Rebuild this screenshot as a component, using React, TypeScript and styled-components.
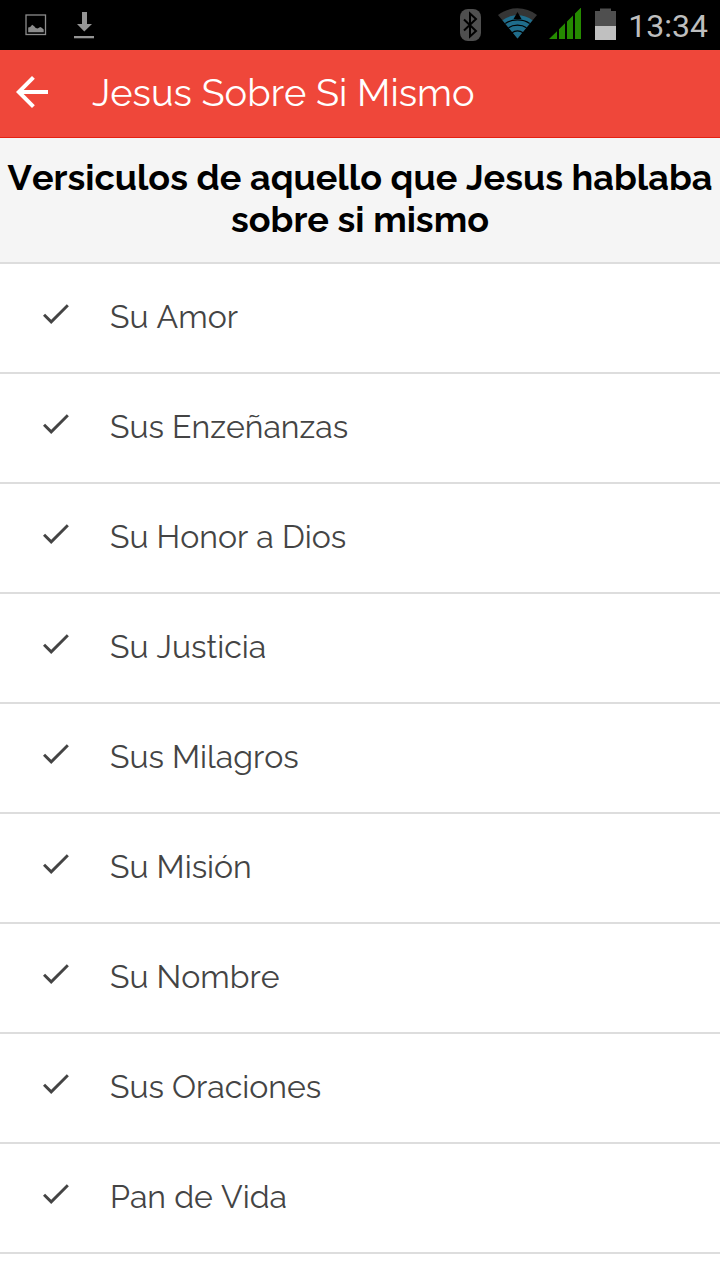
import React from 'react';
import styled, { createGlobalStyle } from 'styled-components';

const GlobalStyle = createGlobalStyle`
  * { box-sizing: border-box; }
  body {
    margin: 0;
    background: #fff;
    font-family: Raleway, Inter, "Liberation Sans", sans-serif;
    font-kerning: none;
  }
`;

const Screen = styled.div`
  display: flex;
  flex-direction: column;
  min-height: 100vh;
  overflow: hidden;
`;

const StatusBar = styled.div`
  display: flex;
  align-items: center;
  justify-content: space-between;
  height: 50px;
  padding: 0 12px 0 24px;
  background: #000;
`;

const StatusGroup = styled.div<{ $gap: number }>`
  display: flex;
  align-items: center;
  gap: ${({ $gap }) => $gap}px;
`;

const Clock = styled.time`
  padding-top: 1px;
  color: #bebebe;
  font: 400 32px/40px Roboto, sans-serif;
`;

const Toolbar = styled.header`
  display: flex;
  align-items: center;
  gap: 36px;
  padding: 18px 8px 21px;
  background: #ef473a;
  border-bottom: 1px solid #e42112;
`;

const BackButton = styled.button`
  display: flex;
  padding: 0;
  border: 0;
  background: none;
  color: #fff;
  cursor: pointer;
`;

const Title = styled.h1`
  margin: 0;
  padding-top: 2px;
  color: #fff;
  font-size: 38px;
  font-weight: 400;
  line-height: 46px;
`;

const Heading = styled.h2`
  margin: 0;
  padding: 18px 4px 22px;
  background: #f5f5f5;
  border-bottom: 2px solid #ddd;
  color: #000;
  font-size: 36px;
  font-weight: 700;
  line-height: 42px;
  text-align: center;
`;

const List = styled.ul`
  margin: 0;
  padding: 0;
  list-style: none;
`;

const Item = styled.li`
  border-bottom: 2px solid #ddd;
`;

const ItemLink = styled.a`
  display: flex;
  align-items: flex-start;
  gap: 36px;
  padding: 32px 38px 34px;
  color: #444;
  font-size: 32px;
  font-weight: 400;
  line-height: 42px;
  text-decoration: none;
`;

const CheckIcon = () => (
  <svg width="36" height="36" viewBox="0 0 24.500 24.500" fill="currentColor" aria-hidden="true">
    <path d="M9 16.17 4.83 12l-1.42 1.41L9 19 21 7l-1.41-1.41z" />
  </svg>
);

const BackIcon = () => (
  <svg width="48" height="48" viewBox="0 0 24 24" fill="currentColor" aria-hidden="true">
    <path d="M20 11H7.83l5.59-5.59L12 4l-8 8 8 8 1.41-1.41L7.83 13H20z" />
  </svg>
);

const PictureIcon = () => (
  <svg width="24" height="24" viewBox="0 0 24 24" aria-hidden="true">
    <rect x="2" y="2" width="19.500" height="19.500" fill="none" stroke="#8c8c8c" strokeWidth="1.300" />
    <path d="M4.200 19.200v-4.700l2-.5 2-2.200 2 1.500 1.500 1.700 2 .4 2.500-1.400 1.500.8 2 1.700v2.700z" fill="#8c8c8c" />
  </svg>
);

const DownloadIcon = () => (
  <svg width="24" height="28" viewBox="0 0 24 28" fill="#949494" aria-hidden="true">
    <path d="M10 1h5v12h5l-7.700 7.500L5 13h5z" />
    <path d="M2 25h20v2.300H2z" />
  </svg>
);

const BluetoothIcon = () => (
  <svg width="28" height="34" viewBox="0 0 28 34" fill="none" aria-hidden="true">
    <rect x="0" y="1" width="21" height="32" rx="8" fill="#4f4f4f" />
    <path d="M4 11.500 16 23l-6 5.500V5.500l6 5.500L4 22.500" stroke="#000" strokeWidth="2" />
  </svg>
);

const WifiIcon = () => (
  <svg width="40" height="34" viewBox="0 0 40 34" fill="none" aria-hidden="true">
    <path d="M19.500 30.500 0 7C6 2.500 12.500.3 19.500.3S33 2.500 39 7z" fill="#353535" />
    <path d="M19.500 30.500 4.500 12.300C9 9 14 7.300 19.500 7.300S30 9 34.500 12.300z" fill="#1f6d8c" />
    <path d="M7.300 15.500C11 12.900 15 11.900 19.500 11.900S28 12.900 31.700 15.500" stroke="#000" strokeWidth="1.200" />
    <path d="M10.500 19.700C13 18 15.500 17.200 19.500 17.200S26 18 28.500 19.700M14 24.700c1.700-1.300 3.500-1.900 5.500-1.900s3.800.6 5.500 1.900" stroke="#000" strokeWidth="1.200" />
    <path d="m19.500 4 4 7h-8z" fill="#000" />
  </svg>
);

const SignalIcon = () => (
  <svg width="36" height="34" viewBox="0 0 36 34" fill="#258a00" aria-hidden="true">
    <path d="M1 31 9 23.200V31zM11 21.300l6-6V31h-6zM19 13.400l6-6V31h-6zM27 5.500l6-6V31h-6z" />
  </svg>
);

const BatteryIcon = () => (
  <svg width="24" height="34" viewBox="0 0 24 34" aria-hidden="true">
    <path d="M1 18V3h5V.5h11V3h5v15z" fill="#4f4f4f" />
    <path d="M1 18h21v14H1z" fill="#c0c0c0" />
  </svg>
);

const topics = [
  'Su Amor',
  'Sus Enzeñanzas',
  'Su Honor a Dios',
  'Su Justicia',
  'Sus Milagros',
  'Su Misión',
  'Su Nombre',
  'Sus Oraciones',
  'Pan de Vida',
];

export default function App() {
  return (
    <Screen>
      <GlobalStyle />
      <StatusBar>
        <StatusGroup $gap={24}>
          <PictureIcon />
          <DownloadIcon />
        </StatusGroup>
        <StatusGroup $gap={10}>
          <BluetoothIcon />
          <WifiIcon />
          <SignalIcon />
          <BatteryIcon />
          <Clock>13:34</Clock>
        </StatusGroup>
      </StatusBar>
      <Toolbar>
        <BackButton type="button" aria-label="Volver">
          <BackIcon />
        </BackButton>
        <Title>Jesus Sobre Si Mismo</Title>
      </Toolbar>
      <main>
        <Heading>Versiculos de aquello que Jesus hablaba sobre si mismo</Heading>
        <List>
          {topics.map((topic) => (
            <Item key={topic}>
              <ItemLink href="#">
                <CheckIcon />
                {topic}
              </ItemLink>
            </Item>
          ))}
        </List>
      </main>
    </Screen>
  );
}
